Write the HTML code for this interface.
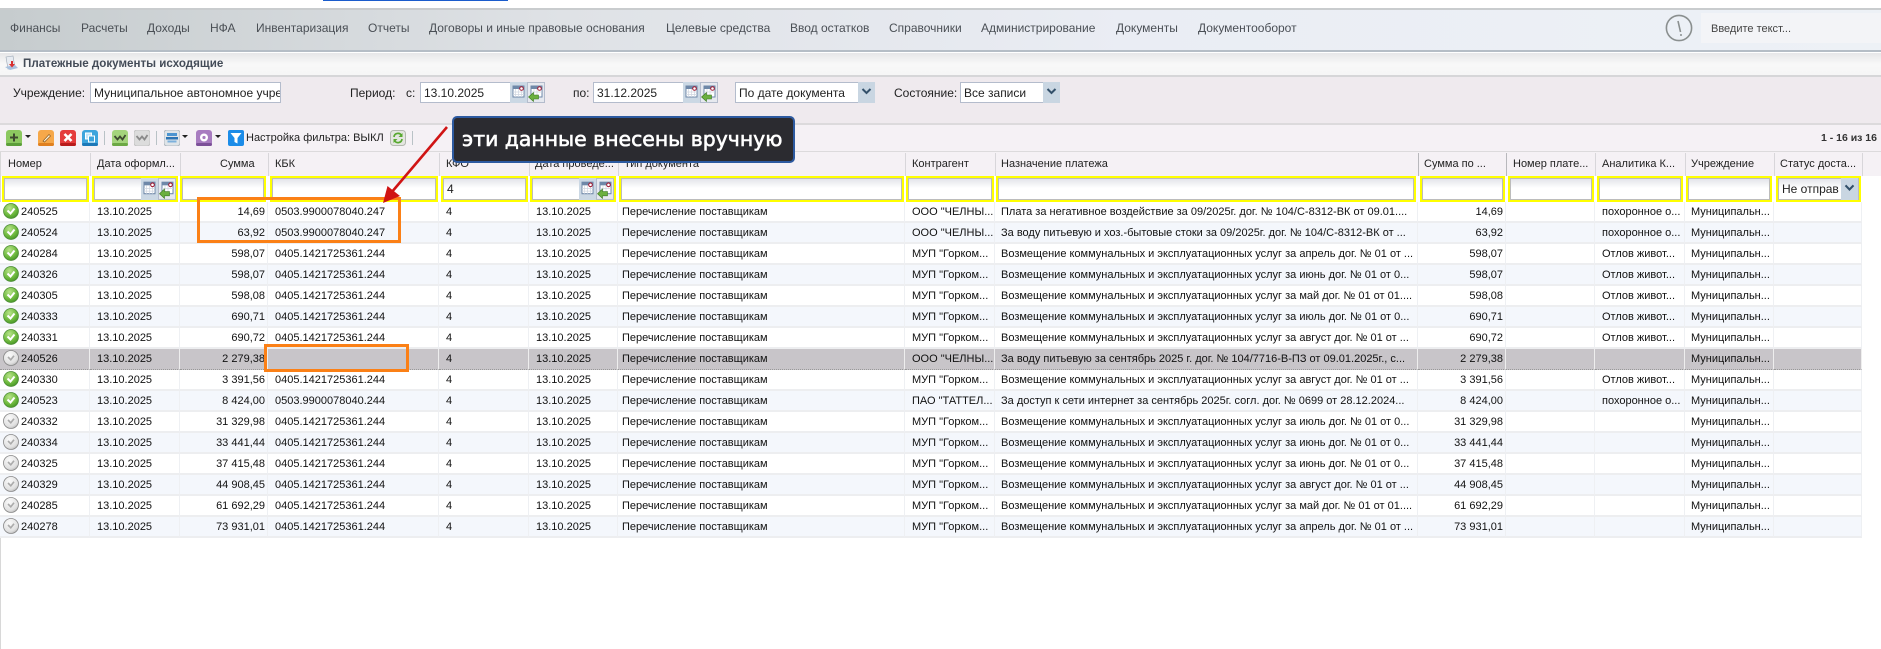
<!DOCTYPE html>
<html lang="ru"><head><meta charset="utf-8"><title>Платежные документы исходящие</title>
<style>
html,body{margin:0;padding:0;background:#fff}
#p{position:relative;width:1881px;height:649px;overflow:hidden;background:#fff;font:11px "Liberation Sans",sans-serif;color:#111}
.a{position:absolute;white-space:nowrap}
.m{position:absolute;top:21px;font-size:12px;line-height:14px;color:#4a4f55;white-space:nowrap}
.l{position:absolute;top:86px;font-size:12px;line-height:14px;color:#222;white-space:nowrap}
.i{position:absolute;top:82px;height:21px;box-sizing:border-box;border:1px solid #b4bccc;background:#fff;font-size:12px;line-height:20px;padding-left:3px;color:#222;overflow:hidden;white-space:nowrap}
.b{position:absolute;width:17px;height:21px}
.d{position:absolute;top:135px;width:0;height:0;border-left:3px solid transparent;border-right:3px solid transparent;border-top:3px solid #222}
.s{position:absolute;top:131px;width:1px;height:14px;background:#b9c2c6}
.t{position:absolute;top:130px;width:16px;height:16px}
.h{position:absolute;top:157px;font-size:11px;line-height:14px;color:#222;white-space:nowrap}
.v{position:absolute;top:153px;width:1px;height:23px;background:#d8d6da}
.f{position:absolute;top:176px;height:26px;box-sizing:border-box;border:2px solid #ff0;overflow:visible}
.f div{box-sizing:border-box;height:22px;border:1px solid #bcbcbc;background:linear-gradient(#e4e5ea,#fff 45%);font-size:12px;line-height:21px;padding-left:3px;color:#222;white-space:nowrap;overflow:hidden}
table{position:absolute;left:0;top:202px;border-collapse:separate;border-spacing:0;table-layout:fixed;width:1862px;font-size:11px;color:#111}
td{box-sizing:border-box;height:21px;padding:0 0 0 7px;line-height:14px;border-right:1px solid #eef0f3;border-bottom:2px solid #edeef0;overflow:hidden;white-space:nowrap;background:#fff}
tr:nth-child(even) td{background:#f4f7fc}
tr.x td{background:#c8c5c9;border-right:1px solid #eee;border-bottom:1px dotted #999;border-top:0}
td.r,td.q{text-align:right;padding:0 2px 0 0}
td.n{padding-left:21px;position:relative}
td.n svg{position:absolute;left:3px;top:1px;width:16px;height:16px}
td.y{padding-left:4px}
td.w{padding-left:6px}
</style></head><body>
<div id="p">
<svg width="0" height="0" style="position:absolute"><defs>
<radialGradient id="gg" cx=".4" cy=".3" r=".8"><stop offset="0" stop-color="#b8e48a"/><stop offset=".6" stop-color="#6cb83c"/><stop offset="1" stop-color="#3c8a22"/></radialGradient>
<radialGradient id="gy" cx=".4" cy=".3" r=".8"><stop offset="0" stop-color="#fafafa"/><stop offset=".7" stop-color="#e0e0e0"/><stop offset="1" stop-color="#a8a8a8"/></radialGradient>
<symbol id="ok" viewBox="0 0 16 16"><circle cx="8" cy="8" r="7.5" fill="url(#gg)" stroke="#4a8a34" stroke-width=".7"/><path d="M4.5 7.5L7.5 10.5L11.5 5.5" fill="none" stroke="#fff" stroke-width="2"/></symbol>
<symbol id="no" viewBox="0 0 16 16"><circle cx="8" cy="8" r="7.5" fill="url(#gy)" stroke="#888" stroke-width=".8"/><path d="M5 7L7.8 9.8L11 5.8" fill="none" stroke="#aaa" stroke-width="1.6"/></symbol>
<symbol id="c1" viewBox="0 0 17 21"><rect width="17" height="21" fill="#cbd8e4"/><rect x="3" y="4" width="11" height="11" fill="#fff" stroke="#6f88a8"/><rect x="3" y="4" width="11" height="3" fill="#6f88a8"/><path d="M5.5 7v8M8.5 7v8M11.5 7v8M3 10h11M3 12.5h11" stroke="#cfd6e0" stroke-width=".7"/><circle cx="11.5" cy="6.5" r="1.8" fill="#fff" stroke="#a01830"/></symbol>
<symbol id="c2" viewBox="0 0 18 21"><rect x=".5" y=".5" width="17" height="20" fill="#e6e9ef" stroke="#b4bccc"/><rect x="4" y="4" width="11" height="11" fill="#fff" stroke="#6f88a8"/><rect x="4" y="4" width="11" height="3" fill="#6f88a8"/><path d="M7 7v8M10 7v8M4 10h11" stroke="#cfd6e0" stroke-width=".7"/><circle cx="12.5" cy="6.5" r="1.8" fill="#fff" stroke="#a01830"/><path d="M1.5 15L6.5 10.5V13H11.5V17H6.5V19.5Z" fill="#6cb040" stroke="#3c7a22" stroke-width=".6"/></symbol>
<symbol id="ar" viewBox="0 0 17 21"><rect width="17" height="21" fill="#c9d6e2"/><path d="M4.5 7L8.5 11L12.5 7" fill="none" stroke="#33506a" stroke-width="2"/></symbol>
</defs></svg>

<div class="a" style="left:323px;top:0;width:185px;height:1px;background:#1a5ccc"></div>
<div class="a" style="left:0;top:8px;width:1881px;height:2px;background:#c9ccce"></div>
<div class="a" style="left:0;top:10px;width:1881px;height:40px;background:linear-gradient(90deg,#c6ccce 0,#dfe2e6 30%,#eaedf4 60%,#edf1f6 100%)"></div>
<div class="a" style="left:0;top:50px;width:1881px;height:2px;background:#b5bdc6"></div>
<div class="m" style="left:10px">Финансы</div>
<div class="m" style="left:81px">Расчеты</div>
<div class="m" style="left:147px">Доходы</div>
<div class="m" style="left:210px">НФА</div>
<div class="m" style="left:256px">Инвентаризация</div>
<div class="m" style="left:368px">Отчеты</div>
<div class="m" style="left:429px">Договоры и иные правовые основания</div>
<div class="m" style="left:666px">Целевые средства</div>
<div class="m" style="left:790px">Ввод остатков</div>
<div class="m" style="left:889px">Справочники</div>
<div class="m" style="left:981px">Администрирование</div>
<div class="m" style="left:1116px">Документы</div>
<div class="m" style="left:1198px">Документооборот</div>
<svg class="a" style="left:1665px;top:14px" width="28" height="28" viewBox="0 0 28 28"><circle cx="14" cy="14" r="12.6" fill="none" stroke="#8a8f8f" stroke-width="1.6"/><path d="M13 7L15.5 18" stroke="#8a8f8f" stroke-width="1.6"/><circle cx="16" cy="21" r="1" fill="#8a8f8f"/></svg>
<div class="a" style="left:1701px;top:13px;width:180px;height:30px;background:#f3f4f7"></div>
<div class="a" style="left:1711px;top:22px;font-size:11px;line-height:14px;color:#444">Введите текст...</div>

<div class="a" style="left:0;top:53px;width:1881px;height:22px;background:linear-gradient(#e6e6e8,#f8f8f8 50%,#f6f6f6)"></div>
<div class="a" style="left:0;top:75px;width:1881px;height:2px;background:#d6d6d8"></div>
<svg class="a" style="left:4px;top:55px" width="16" height="16" viewBox="0 0 16 16"><path d="M2 2L9 1L11 13L4 14Z" fill="#e8ecf2" stroke="#9aa6b4" stroke-width=".6"/><path d="M1 12L6 15L14 13L11 10Z" fill="#a8c0de"/><path d="M7 6h2v3h2L8 12.5L5 9h2Z" fill="#d83030"/></svg>
<div class="a" style="left:23px;top:57px;font-size:11.6px;font-weight:bold;line-height:14px;color:#444c58">Платежные документы исходящие</div>

<div class="a" style="left:0;top:77px;width:1881px;height:46px;background:#efeaee"></div>
<div class="a" style="left:0;top:123px;width:1881px;height:2px;background:#dcdadc"></div>
<div class="l" style="left:13px">Учреждение:</div>
<div class="i" style="left:90px;width:191px">Муниципальное автономное учре</div>
<div class="l" style="left:350px">Период:</div>
<div class="l" style="left:406px">с:</div>
<div class="i" style="left:420px;width:91px">13.10.2025</div>
<svg class="b" style="left:510px;top:82px"><use href="#c1"/></svg>
<svg class="b" style="left:527px;top:82px;width:18px"><use href="#c2"/></svg>
<div class="l" style="left:573px">по:</div>
<div class="i" style="left:593px;width:91px">31.12.2025</div>
<svg class="b" style="left:683px;top:82px"><use href="#c1"/></svg>
<svg class="b" style="left:700px;top:82px;width:18px"><use href="#c2"/></svg>
<div class="i" style="left:735px;width:140px">По дате документа</div>
<svg class="b" style="left:858px;top:82px"><use href="#ar"/></svg>
<div class="l" style="left:894px">Состояние:</div>
<div class="i" style="left:960px;width:100px">Все записи</div>
<svg class="b" style="left:1043px;top:82px"><use href="#ar"/></svg>

<div class="a" style="left:0;top:125px;width:1881px;height:51px;background:#f5f1f5"></div>
<div class="a" style="left:0;top:151px;width:1881px;height:1px;background:#dcdadc"></div>
<svg class="t" style="left:6px" viewBox="0 0 16 16"><rect width="16" height="16" rx="3" fill="#8cc860"/><rect y="13" width="16" height="3" rx="1.5" fill="#5c9e3a"/><path d="M8 3.5v8M4 7.5h8" stroke="#3e4a30" stroke-width="2"/></svg><div class="d" style="left:25px"></div>
<svg class="t" style="left:38px" viewBox="0 0 16 16"><rect width="16" height="16" rx="3" fill="#f6a84a"/><rect y="13" width="16" height="3" rx="1.5" fill="#e08020"/><path d="M5 11L11 4.5L12.5 6L6.5 12Z" fill="#fff2d8" stroke="#8a5a20" stroke-width=".7"/></svg>
<svg class="t" style="left:60px" viewBox="0 0 16 16"><rect width="16" height="16" rx="3" fill="#e43c3c"/><rect y="13" width="16" height="3" rx="1.5" fill="#b81c1c"/><path d="M4.5 4l7 7M11.5 4l-7 7" stroke="#fff" stroke-width="2.6"/></svg>
<svg class="t" style="left:82px" viewBox="0 0 16 16"><rect width="16" height="16" rx="3" fill="#3ca4dc"/><rect y="13" width="16" height="3" rx="1.5" fill="#1c78b8"/><rect x="3.5" y="3" width="6" height="6" fill="#bfe4f8" stroke="#fff"/><rect x="6.5" y="6" width="6" height="6" fill="#3ca4dc" stroke="#fff"/></svg>
<div class="s" style="left:104px"></div>
<svg class="t" style="left:112px" viewBox="0 0 16 16"><rect width="16" height="16" rx="3" fill="#a4d47c"/><rect y="13" width="16" height="3" rx="1.5" fill="#6ca844"/><path d="M2.5 6L5.5 9.5L8 6.5L10.5 9.5L13.5 5" fill="none" stroke="#3e4a30" stroke-width="1.8"/></svg>
<svg class="t" style="left:134px" viewBox="0 0 16 16"><rect width="16" height="16" rx="3" fill="#dcdcdc" stroke="#c4c4c4"/><path d="M2.5 6L5.5 9.5L8 6.5L10.5 9.5L13.5 5" fill="none" stroke="#8a8a8a" stroke-width="1.8"/></svg>
<div class="s" style="left:156px"></div>
<svg class="t" style="left:164px" viewBox="0 0 16 16"><rect width="16" height="16" rx="3" fill="#dfe4e8" stroke="#b0b8c0"/><rect x="3" y="3" width="10" height="3" fill="#4c94d0"/><rect x="2" y="7" width="12" height="2.5" fill="#2c74b4"/><rect x="3.5" y="10.5" width="9" height="2" fill="#7cb0dc"/></svg><div class="d" style="left:182px"></div>
<svg class="t" style="left:196px" viewBox="0 0 16 16"><rect width="16" height="16" rx="3" fill="#a87cc0"/><rect y="13" width="16" height="3" rx="1.5" fill="#7c5098"/><circle cx="8" cy="7.5" r="4" fill="#fff"/><circle cx="8" cy="7.5" r="1.6" fill="#a87cc0"/></svg><div class="d" style="left:215px"></div>
<svg class="t" style="left:228px" viewBox="0 0 16 16"><rect width="16" height="16" rx="2" fill="#1c8ce8"/><path d="M2.5 3h11L9.5 8v5.5L6.5 12V8Z" fill="#fff"/></svg>
<div class="a" style="left:246px;top:131px;font-size:11px;line-height:14px;color:#222">Настройка фильтра: ВЫКЛ</div>
<svg class="t" style="left:390px" viewBox="0 0 16 16"><rect x=".5" y=".5" width="15" height="15" rx="3" fill="#e4e6e0" stroke="#b4b8b0"/><path d="M4 7A4 4 0 0 1 11.5 5.5M12 9A4 4 0 0 1 4.5 10.5" fill="none" stroke="#58a830" stroke-width="1.7"/><path d="M12.5 3v4h-4ZM3.5 13V9h4Z" fill="#58a830"/></svg>
<div class="s" style="left:412px"></div>
<div class="a" style="right:4px;top:131px;font-size:10.5px;font-weight:bold;line-height:14px;color:#333">1 - 16 из 16</div>

<div class="v" style="left:90px"></div><div class="v" style="left:180px"></div><div class="v" style="left:268px"></div><div class="v" style="left:439px"></div><div class="v" style="left:529px"></div><div class="v" style="left:618px"></div><div class="v" style="left:905px"></div><div class="v" style="left:995px"></div><div class="v" style="left:1418px;background:#b8b8bc"></div><div class="v" style="left:1506px;background:#b8b8bc"></div><div class="v" style="left:1595px"></div><div class="v" style="left:1685px"></div><div class="v" style="left:1774px"></div><div class="v" style="left:1862px"></div>
<div class="h" style="left:8px">Номер</div>
<div class="h" style="left:97px">Дата оформл...</div>
<div class="h" style="left:220px">Сумма</div>
<div class="h" style="left:275px">КБК</div>
<div class="h" style="left:446px">КФО</div>
<div class="h" style="left:535px">Дата проведе...</div>
<div class="h" style="left:624px">Тип документа</div>
<div class="h" style="left:912px">Контрагент</div>
<div class="h" style="left:1001px">Назначение платежа</div>
<div class="h" style="left:1424px">Сумма по ...</div>
<div class="h" style="left:1513px">Номер плате...</div>
<div class="h" style="left:1602px">Аналитика К...</div>
<div class="h" style="left:1691px">Учреждение</div>
<div class="h" style="left:1780px">Статус доста...</div>

<div class="f" style="left:2px;width:87px"><div></div></div>
<div class="f" style="left:92px;width:86px"><div></div></div>
<svg class="b" style="left:141px;top:178px;width:17px;height:22px" preserveAspectRatio="none" viewBox="0 0 17 21"><use href="#c1"/></svg>
<svg class="b" style="left:158px;top:178px;width:18px;height:22px" preserveAspectRatio="none" viewBox="0 0 18 21"><use href="#c2"/></svg>
<div class="f" style="left:180px;width:86px"><div></div></div>
<div class="f" style="left:270px;width:168px"><div></div></div>
<div class="f" style="left:441px;width:87px"><div>4</div></div>
<div class="f" style="left:530px;width:86px"><div></div></div>
<svg class="b" style="left:579px;top:178px;width:17px;height:22px" preserveAspectRatio="none" viewBox="0 0 17 21"><use href="#c1"/></svg>
<svg class="b" style="left:596px;top:178px;width:18px;height:22px" preserveAspectRatio="none" viewBox="0 0 18 21"><use href="#c2"/></svg>
<div class="f" style="left:619px;width:285px"><div></div></div>
<div class="f" style="left:906px;width:88px"><div></div></div>
<div class="f" style="left:996px;width:420px"><div></div></div>
<div class="f" style="left:1420px;width:85px"><div></div></div>
<div class="f" style="left:1508px;width:86px"><div></div></div>
<div class="f" style="left:1597px;width:86px"><div></div></div>
<div class="f" style="left:1686px;width:86px"><div></div></div>
<div class="f" style="left:1776px;width:85px"><div>Не отправ</div></div>
<svg class="b" style="left:1841px;top:178px;width:17px;height:22px" preserveAspectRatio="none" viewBox="0 0 17 21"><use href="#ar"/></svg>

<div class="a" style="left:0;top:152px;width:1px;height:497px;background:#d8d8d8"></div>
<table><colgroup><col style="width:90px"><col style="width:90px"><col style="width:88px"><col style="width:171px"><col style="width:90px"><col style="width:89px"><col style="width:287px"><col style="width:90px"><col style="width:423px"><col style="width:88px"><col style="width:89px"><col style="width:90px"><col style="width:89px"><col style="width:88px"></colgroup><tbody>
<tr><td class="n"><svg><use href="#ok"/></svg>240525</td><td>13.10.2025</td><td class="r">14,69</td><td>0503.9900078040.247</td><td>4</td><td>13.10.2025</td><td class="y">Перечисление поставщикам</td><td>ООО "ЧЕЛНЫ...</td><td class="w">Плата за негативное воздействие за 09/2025г. дог. № 104/С-8312-ВК от 09.01....</td><td class="q">14,69</td><td></td><td>похоронное о...</td><td class="w">Муниципальн...</td><td></td></tr>
<tr><td class="n"><svg><use href="#ok"/></svg>240524</td><td>13.10.2025</td><td class="r">63,92</td><td>0503.9900078040.247</td><td>4</td><td>13.10.2025</td><td class="y">Перечисление поставщикам</td><td>ООО "ЧЕЛНЫ...</td><td class="w">За воду питьевую и хоз.-бытовые стоки за 09/2025г. дог. № 104/С-8312-ВК от ...</td><td class="q">63,92</td><td></td><td>похоронное о...</td><td class="w">Муниципальн...</td><td></td></tr>
<tr><td class="n"><svg><use href="#ok"/></svg>240284</td><td>13.10.2025</td><td class="r">598,07</td><td>0405.1421725361.244</td><td>4</td><td>13.10.2025</td><td class="y">Перечисление поставщикам</td><td>МУП "Горком...</td><td class="w">Возмещение коммунальных и эксплуатационных услуг за апрель дог. № 01 от ...</td><td class="q">598,07</td><td></td><td>Отлов живот...</td><td class="w">Муниципальн...</td><td></td></tr>
<tr><td class="n"><svg><use href="#ok"/></svg>240326</td><td>13.10.2025</td><td class="r">598,07</td><td>0405.1421725361.244</td><td>4</td><td>13.10.2025</td><td class="y">Перечисление поставщикам</td><td>МУП "Горком...</td><td class="w">Возмещение коммунальных и эксплуатационных услуг за июнь дог. № 01 от 0...</td><td class="q">598,07</td><td></td><td>Отлов живот...</td><td class="w">Муниципальн...</td><td></td></tr>
<tr><td class="n"><svg><use href="#ok"/></svg>240305</td><td>13.10.2025</td><td class="r">598,08</td><td>0405.1421725361.244</td><td>4</td><td>13.10.2025</td><td class="y">Перечисление поставщикам</td><td>МУП "Горком...</td><td class="w">Возмещение коммунальных и эксплуатационных услуг за май дог. № 01 от 01....</td><td class="q">598,08</td><td></td><td>Отлов живот...</td><td class="w">Муниципальн...</td><td></td></tr>
<tr><td class="n"><svg><use href="#ok"/></svg>240333</td><td>13.10.2025</td><td class="r">690,71</td><td>0405.1421725361.244</td><td>4</td><td>13.10.2025</td><td class="y">Перечисление поставщикам</td><td>МУП "Горком...</td><td class="w">Возмещение коммунальных и эксплуатационных услуг за июль дог. № 01 от 0...</td><td class="q">690,71</td><td></td><td>Отлов живот...</td><td class="w">Муниципальн...</td><td></td></tr>
<tr><td class="n"><svg><use href="#ok"/></svg>240331</td><td>13.10.2025</td><td class="r">690,72</td><td>0405.1421725361.244</td><td>4</td><td>13.10.2025</td><td class="y">Перечисление поставщикам</td><td>МУП "Горком...</td><td class="w">Возмещение коммунальных и эксплуатационных услуг за август дог. № 01 от ...</td><td class="q">690,72</td><td></td><td>Отлов живот...</td><td class="w">Муниципальн...</td><td></td></tr>
<tr class="x"><td class="n"><svg><use href="#no"/></svg>240526</td><td>13.10.2025</td><td class="r">2 279,38</td><td></td><td>4</td><td>13.10.2025</td><td class="y">Перечисление поставщикам</td><td>ООО "ЧЕЛНЫ...</td><td class="w">За воду питьевую за сентябрь 2025 г. дог. № 104/7716-В-ПЗ от 09.01.2025г., с...</td><td class="q">2 279,38</td><td></td><td></td><td class="w">Муниципальн...</td><td></td></tr>
<tr><td class="n"><svg><use href="#ok"/></svg>240330</td><td>13.10.2025</td><td class="r">3 391,56</td><td>0405.1421725361.244</td><td>4</td><td>13.10.2025</td><td class="y">Перечисление поставщикам</td><td>МУП "Горком...</td><td class="w">Возмещение коммунальных и эксплуатационных услуг за август дог. № 01 от ...</td><td class="q">3 391,56</td><td></td><td>Отлов живот...</td><td class="w">Муниципальн...</td><td></td></tr>
<tr><td class="n"><svg><use href="#ok"/></svg>240523</td><td>13.10.2025</td><td class="r">8 424,00</td><td>0503.9900078040.244</td><td>4</td><td>13.10.2025</td><td class="y">Перечисление поставщикам</td><td>ПАО "ТАТТЕЛ...</td><td class="w">За доступ к сети интернет за сентябрь 2025г. согл. дог. № 0699 от 28.12.2024...</td><td class="q">8 424,00</td><td></td><td>похоронное о...</td><td class="w">Муниципальн...</td><td></td></tr>
<tr><td class="n"><svg><use href="#no"/></svg>240332</td><td>13.10.2025</td><td class="r">31 329,98</td><td>0405.1421725361.244</td><td>4</td><td>13.10.2025</td><td class="y">Перечисление поставщикам</td><td>МУП "Горком...</td><td class="w">Возмещение коммунальных и эксплуатационных услуг за июль дог. № 01 от 0...</td><td class="q">31 329,98</td><td></td><td></td><td class="w">Муниципальн...</td><td></td></tr>
<tr><td class="n"><svg><use href="#no"/></svg>240334</td><td>13.10.2025</td><td class="r">33 441,44</td><td>0405.1421725361.244</td><td>4</td><td>13.10.2025</td><td class="y">Перечисление поставщикам</td><td>МУП "Горком...</td><td class="w">Возмещение коммунальных и эксплуатационных услуг за июнь дог. № 01 от 0...</td><td class="q">33 441,44</td><td></td><td></td><td class="w">Муниципальн...</td><td></td></tr>
<tr><td class="n"><svg><use href="#no"/></svg>240325</td><td>13.10.2025</td><td class="r">37 415,48</td><td>0405.1421725361.244</td><td>4</td><td>13.10.2025</td><td class="y">Перечисление поставщикам</td><td>МУП "Горком...</td><td class="w">Возмещение коммунальных и эксплуатационных услуг за июнь дог. № 01 от 0...</td><td class="q">37 415,48</td><td></td><td></td><td class="w">Муниципальн...</td><td></td></tr>
<tr><td class="n"><svg><use href="#no"/></svg>240329</td><td>13.10.2025</td><td class="r">44 908,45</td><td>0405.1421725361.244</td><td>4</td><td>13.10.2025</td><td class="y">Перечисление поставщикам</td><td>МУП "Горком...</td><td class="w">Возмещение коммунальных и эксплуатационных услуг за август дог. № 01 от ...</td><td class="q">44 908,45</td><td></td><td></td><td class="w">Муниципальн...</td><td></td></tr>
<tr><td class="n"><svg><use href="#no"/></svg>240285</td><td>13.10.2025</td><td class="r">61 692,29</td><td>0405.1421725361.244</td><td>4</td><td>13.10.2025</td><td class="y">Перечисление поставщикам</td><td>МУП "Горком...</td><td class="w">Возмещение коммунальных и эксплуатационных услуг за май дог. № 01 от 01....</td><td class="q">61 692,29</td><td></td><td></td><td class="w">Муниципальн...</td><td></td></tr>
<tr><td class="n"><svg><use href="#no"/></svg>240278</td><td>13.10.2025</td><td class="r">73 931,01</td><td>0405.1421725361.244</td><td>4</td><td>13.10.2025</td><td class="y">Перечисление поставщикам</td><td>МУП "Горком...</td><td class="w">Возмещение коммунальных и эксплуатационных услуг за апрель дог. № 01 от ...</td><td class="q">73 931,01</td><td></td><td></td><td class="w">Муниципальн...</td><td></td></tr>
</tbody></table>

<div class="a" style="left:197px;top:197px;width:204px;height:46px;box-sizing:border-box;border:3px solid #fb8016"></div>
<div class="a" style="left:264px;top:344px;width:145px;height:28px;box-sizing:border-box;border:3px solid #fb8016"></div>
<svg class="a" style="left:375px;top:120px" width="80" height="90" viewBox="0 0 80 90"><path d="M72 7L16 73" stroke="#d01414" stroke-width="2.6"/><path d="M8 83L12.5 66L25 76Z" fill="#d01414"/></svg>
<div class="a" style="left:452px;top:116px;width:343px;height:47px;box-sizing:border-box;background:#2b2b30;border:2px solid #2d5aa0;border-radius:5px;color:#fff;font:20.4px/43px 'DejaVu Sans',sans-serif;-webkit-text-stroke:.6px #fff;padding-left:8px">эти данные внесены вручную</div>
</div>
</body></html>
